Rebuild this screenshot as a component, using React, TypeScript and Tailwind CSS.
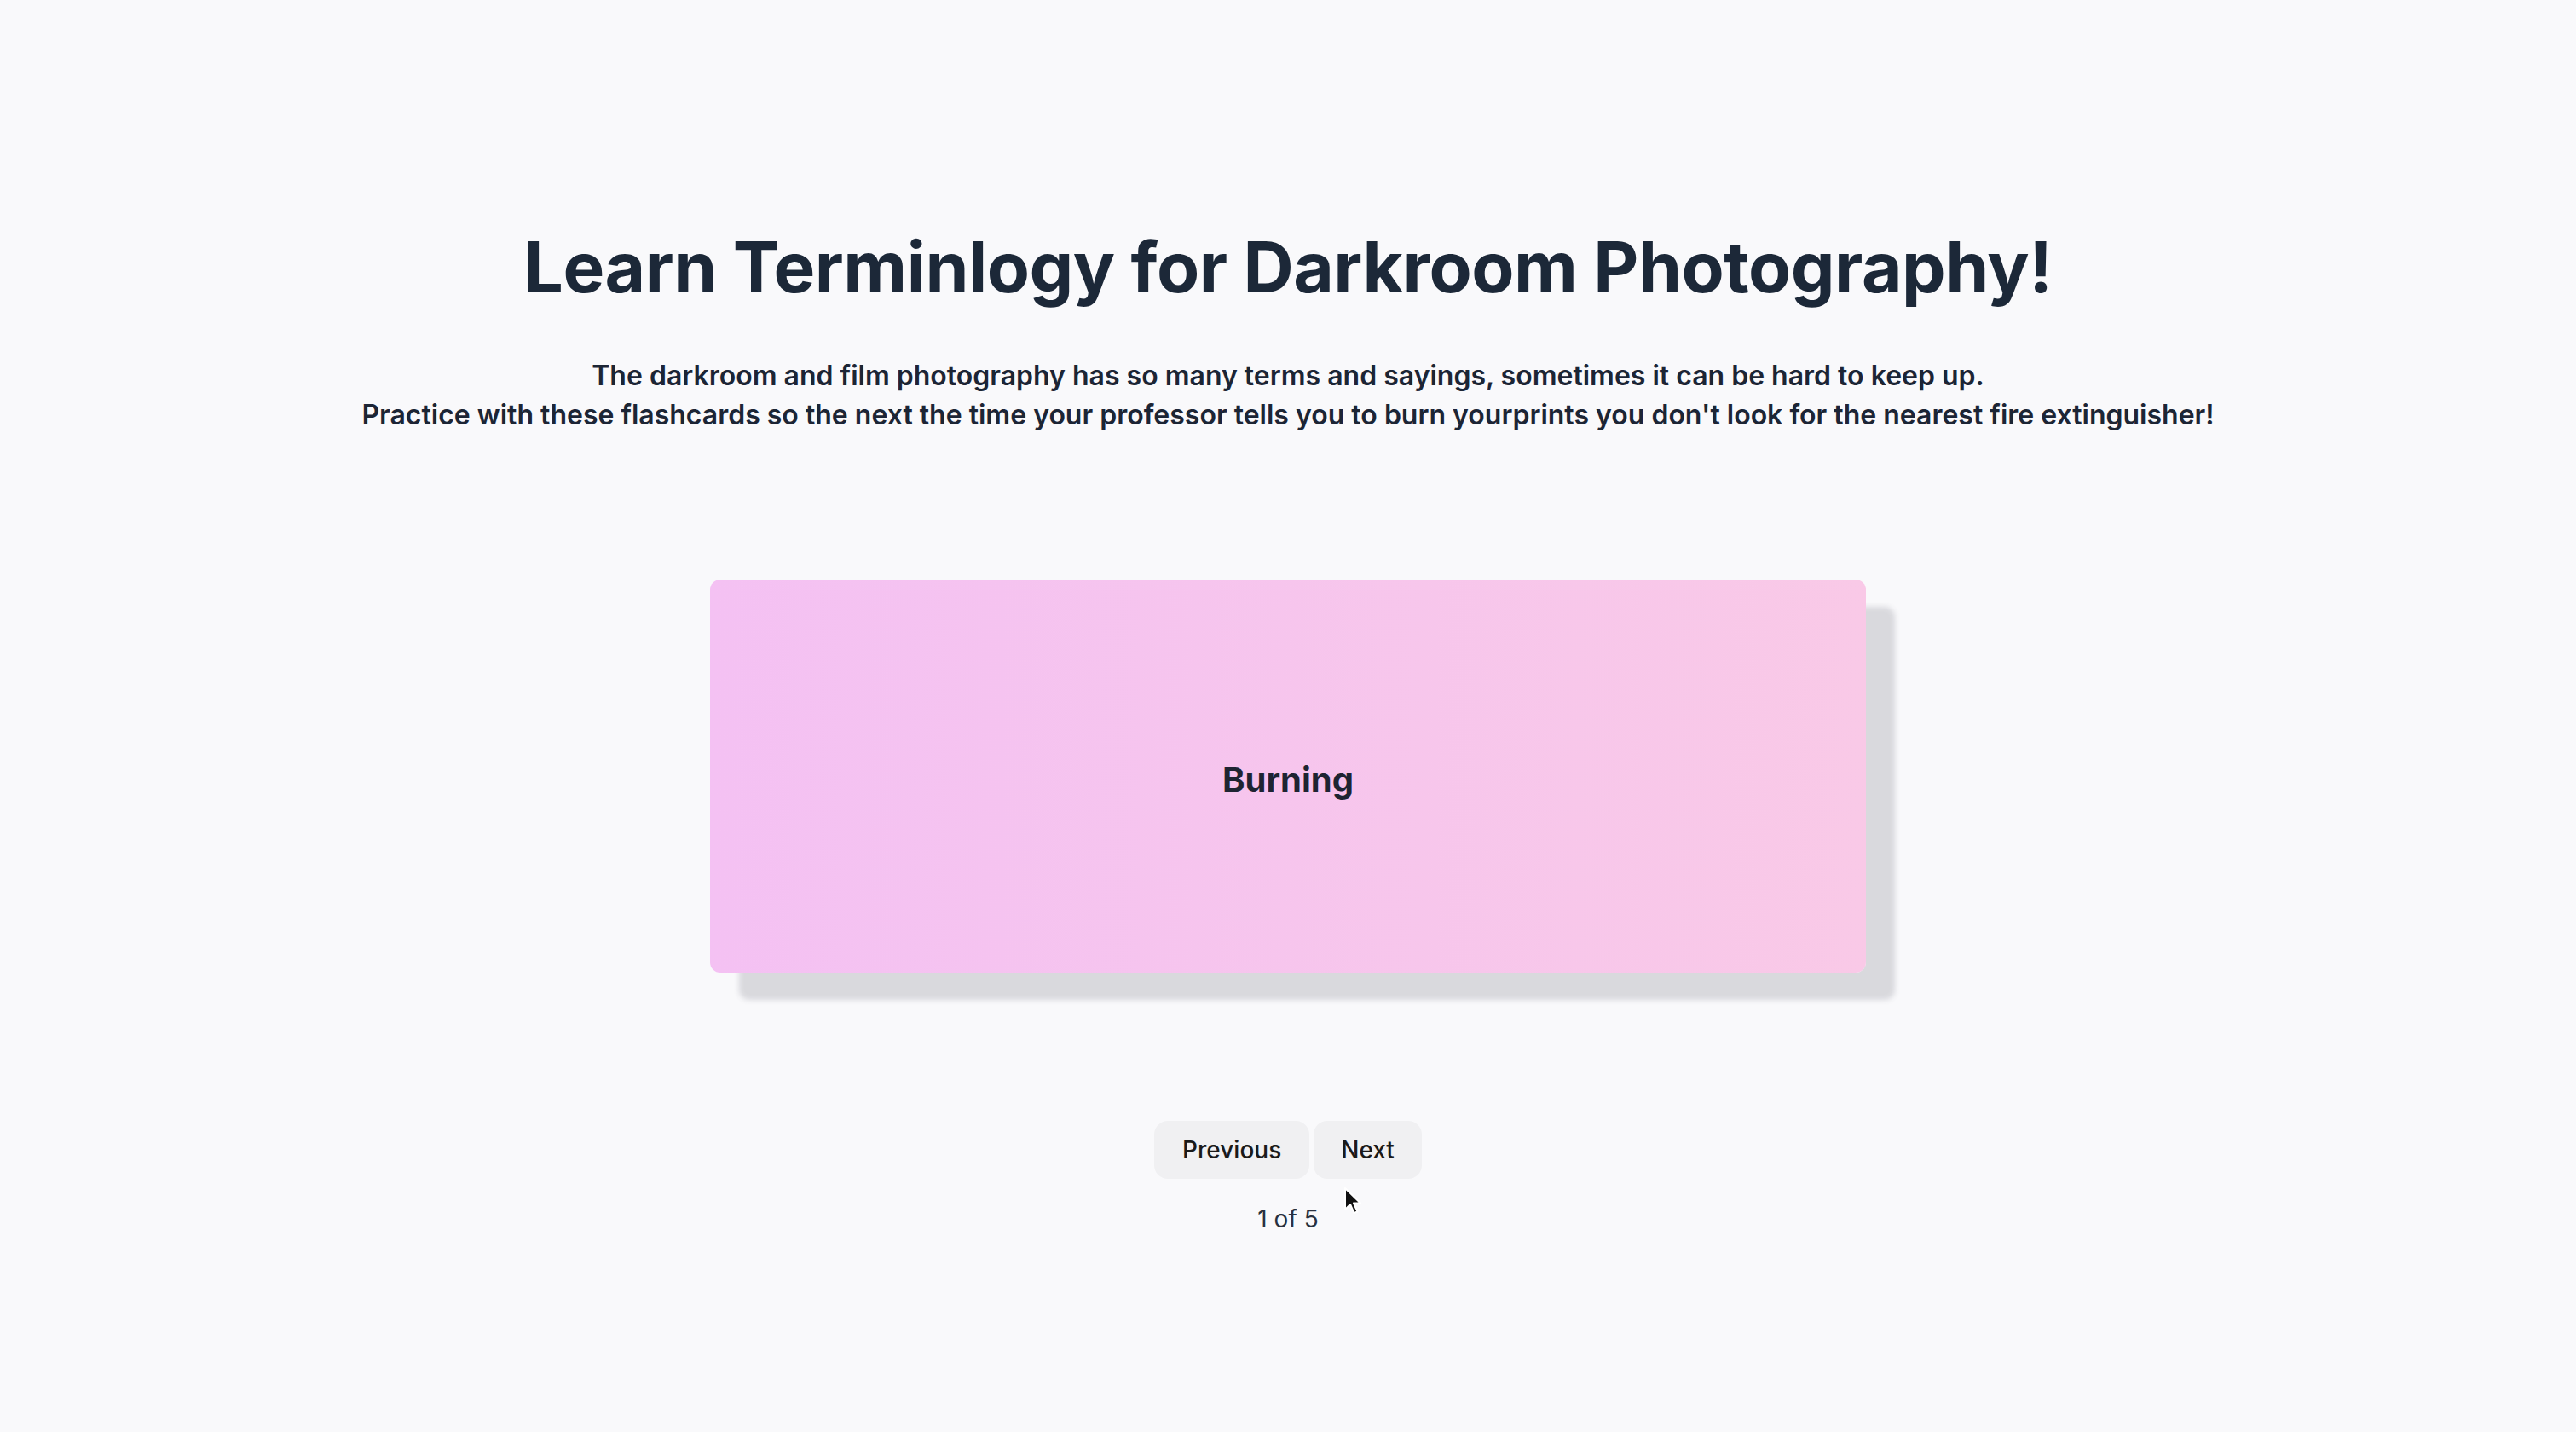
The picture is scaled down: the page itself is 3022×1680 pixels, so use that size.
import React from "react";

export default function App() {
  return (
    <div
      className="relative w-[3022px] h-[1680px] bg-[#f9f9fb] flex flex-col items-center"
      style={{ fontFamily: "Inter, 'Noto Sans', sans-serif" }}
    >
      <h1 className="mt-[273px] text-[82px] leading-[82px] font-bold text-[#1c2838] tracking-[-0.5px]">
        Learn Terminlogy for Darkroom Photography!
      </h1>
      <p className="mt-[63px] text-[32px] leading-[46px] font-semibold text-[#1c2535] text-center">
        The darkroom and film photography has so many terms and sayings, sometimes it can be hard to keep up.
        <br />
        Practice with these flashcards so the next the time your professor tells you to burn yourprints you don't look for the nearest fire extinguisher!
      </p>
      <div className="mt-[170px] w-[1356px] h-[461px] rounded-[12px] bg-gradient-to-r from-[#f4c1f3] to-[#f9c9e7] shadow-[34px_32px_6px_rgba(60,60,80,0.17)] flex items-center justify-center">
        <span className="mt-[8px] text-[40px] font-bold text-[#1e2432]">Burning</span>
      </div>
      <div className="mt-[174px] flex gap-[5px]">
        <button className="h-[68px] px-[33px] rounded-[16px] bg-[#f0f0f2] text-[28px] leading-[42px] font-medium text-[#1a1a1a]">
          Previous
        </button>
        <button className="h-[68px] px-[32px] rounded-[16px] bg-[#f0f0f2] text-[28px] leading-[42px] font-medium text-[#1a1a1a]">
          Next
        </button>
      </div>
      <div className="mt-[26px] text-[28px] leading-[42px] text-[#283140]">1 of 5</div>
      <svg
        className="absolute left-[1576px] top-[1392px]"
        width="22"
        height="34"
        viewBox="0 0 22 34"
      >
        <path
          d="M2 2 L2 27 L8 21 L12.5 31 L16.5 29.5 L12 19.5 L20 19.5 Z"
          fill="#111"
          stroke="#fff"
          strokeWidth="2"
          strokeLinejoin="round"
        />
      </svg>
    </div>
  );
}
